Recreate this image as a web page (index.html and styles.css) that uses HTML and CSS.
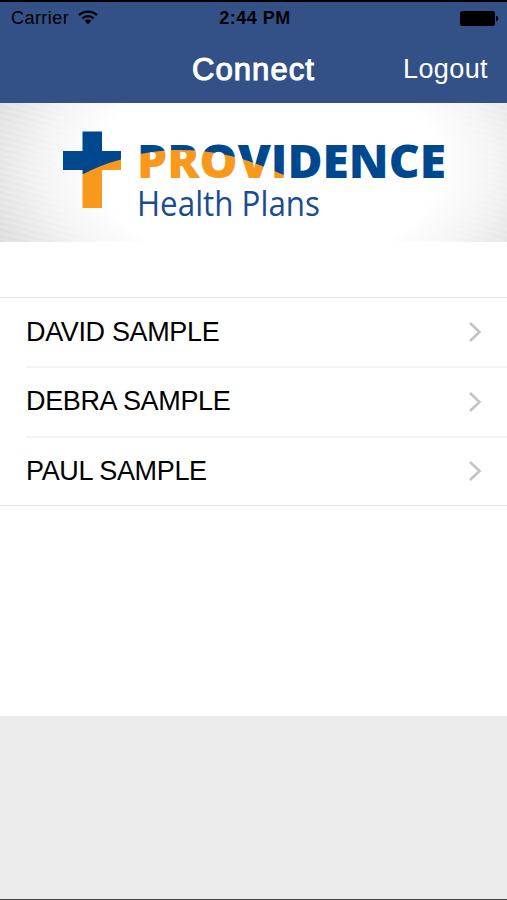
FILE: index.html
```html
<!DOCTYPE html>
<html lang="en">
<head>
  <meta charset="UTF-8">
  <meta name="viewport" content="width=device-width, initial-scale=1.0">
  <title>Connect</title>
  <link rel="stylesheet" href="styles.css">
</head>
<body>
  <header class="header">
    <div class="status-bar">
      <div class="carrier">
        <span>Carrier</span>
        <svg class="wifi" width="20" height="15" viewBox="0 0 20 15">
          <path d="M1 5.200a13 13 0 0 1 18 0M4.300 8.500a8.200 8.200 0 0 1 11.400 0" fill="none" stroke="#000" stroke-width="2.3"/>
          <path d="M6.600 10.800a5 5 0 0 1 6.800 0L10 14.400z"/>
        </svg>
      </div>
      <span class="time">2:44 PM</span>
      <svg class="battery" width="39" height="16" viewBox="0 0 39 16">
        <rect width="35" height="15" rx="2.5"/>
        <path d="M36 4.800c3 .8 3 4.800 0 5.600z"/>
      </svg>
    </div>
    <nav class="nav-bar">
      <h1>Connect</h1>
      <a href="#" class="logout">Logout</a>
    </nav>
  </header>

  <div class="banner">
    <svg class="logo" width="507" height="139" viewBox="0 103 507 139">
      <defs>
        <pattern id="swoosh" patternUnits="userSpaceOnUse" x="0" y="103" width="507" height="139">
          <rect width="507" height="139" fill="#00488d"/>
          <path d="M130 54C160 45 195 45 231 53C252 58 270 66 284 72V90H130z" fill="#f8981d"/>
        </pattern>
      </defs>
      <path d="M82.500 131.500h19.500v19.500h19v19h-19v4h-19.500v-4h-19.500v-19h19.500z" fill="#00488d"/>
      <path d="M82.500 174.500Q100 165 121 159.500V170h-19v38h-19.500z" fill="#f8981d"/>
      <text class="brand" x="137" y="177.500" textLength="309" lengthAdjust="spacingAndGlyphs" fill="url(#swoosh)">PROVIDENCE</text>
      <text class="brand-sub" x="137" y="216" textLength="183" lengthAdjust="spacingAndGlyphs">Health Plans</text>
    </svg>
  </div>

  <ul class="members">
    <li>
      <a href="#"><span>DAVID SAMPLE</span>
        <svg class="chevron" width="14" height="22" viewBox="0 0 14 22"><path d="M2 2l9.500 9L2 20"/></svg>
      </a>
    </li>
    <li>
      <a href="#"><span>DEBRA SAMPLE</span>
        <svg class="chevron" width="14" height="22" viewBox="0 0 14 22"><path d="M2 2l9.500 9L2 20"/></svg>
      </a>
    </li>
    <li>
      <a href="#"><span>PAUL SAMPLE</span>
        <svg class="chevron" width="14" height="22" viewBox="0 0 14 22"><path d="M2 2l9.500 9L2 20"/></svg>
      </a>
    </li>
  </ul>

  <footer class="footer"></footer>
</body>
</html>
```
FILE: styles.css
```css
* {
  box-sizing: border-box;
}

body {
  margin: 0;
  height: 900px;
  display: flex;
  flex-direction: column;
  overflow: hidden;
  background-color: #fff;
  color: #000;
  font-family: "Liberation Sans", Arial, sans-serif;
}

a {
  color: inherit;
  text-decoration: none;
}

.header {
  height: 103px;
  border-top: 2px solid #000;
  background-color: #335187;
}

.status-bar {
  display: grid;
  grid-template-columns: 1fr auto 1fr;
  align-items: center;
  height: 33px;
  padding: 0 8px 0 11px;
  font-size: 18px;
}

.carrier {
  display: flex;
  align-items: center;
  gap: 9px;
  letter-spacing: 0.45px;
}

.wifi {
  margin-top: -3px;
}

.time {
  font-size: 18px;
  font-weight: bold;
  letter-spacing: 0.5px;
}

.battery {
  justify-self: end;
}

.nav-bar {
  display: grid;
  grid-template-columns: 1fr auto 1fr;
  align-items: center;
  height: 68px;
  padding: 0 19px;
  color: #fff;
}

h1 {
  grid-column: 2;
  margin: 1px 0 0;
  font-size: 31px;
  font-weight: normal;
  letter-spacing: 1.1px;
  -webkit-text-stroke: 1.1px #fff;
  text-shadow: 0 -1px 1px rgba(0, 0, 0, 0.4);
}

.logout {
  justify-self: end;
  font-size: 27px;
  letter-spacing: 0.4px;
}

.banner {
  height: 139px;
  background:
    radial-gradient(ellipse 285px 170px at 53% 45%, #fff 60%, rgba(255, 255, 255, 0.75) 80%, rgba(255, 255, 255, 0.1) 112%),
    repeating-linear-gradient(14deg, #cecece 0, #d8d8d8 3px, #cecece 6px);
}

.logo {
  display: block;
}

.brand {
  font-family: "Open Sans", sans-serif;
  font-size: 46px;
  font-weight: 800;
}

.brand-sub {
  font-family: "Open Sans", sans-serif;
  font-size: 34px;
  fill: #1b4b91;
}

.members {
  margin: 55px 0 0;
  padding: 0;
  list-style: none;
  border-top: 1px solid #e4e4e4;
  border-bottom: 1px solid #e4e4e4;
}

.members li {
  padding-left: 26px;
}

.members a {
  display: flex;
  align-items: center;
  justify-content: space-between;
  height: 68px;
  padding-right: 25px;
  font-size: 27px;
  letter-spacing: -0.35px;
}

.members li + li a {
  height: 69.500px;
  border-top: 2px solid #f3f3f3;
}

.chevron {
  fill: none;
  stroke: #c4c4c4;
  stroke-width: 2.6;
}

.footer {
  height: 184px;
  margin-top: auto;
  background-color: #ebebeb;
  border-bottom: 1px solid #444;
}
```
